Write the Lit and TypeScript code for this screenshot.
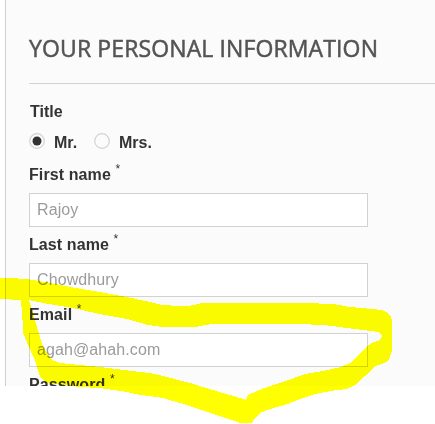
import { LitElement, html, css } from "lit";
import { customElement, property } from "lit/decorators.js";

@customElement("form-field")
class FormField extends LitElement {
  @property() label = "";
  @property() value = "";

  static styles = css`
    :host { display: block; height: 70px; }
    .label {
      height: 30px;
      line-height: 24px;
      font-weight: 700;
      font-size: 16px;
      letter-spacing: 0.1px;
      color: #333;
      white-space: nowrap;
    }
    .mark {
      display: inline-block;
      font-size: 12px;
      font-weight: 400;
      line-height: 0;
      letter-spacing: 0;
      transform: translateY(-7px);
    }
    input {
      display: block;
      box-sizing: border-box;
      width: 339px;
      height: 34px;
      margin: 0;
      padding: 0 7px;
      border: 1px solid #d2d2d2;
      border-radius: 0;
      background: #fff;
      color: #9c9b9b;
      font: 16px "Liberation Sans", Arial, sans-serif;
      letter-spacing: 0.1px;
      outline: none;
    }
  `;

  render() {
    return html`
      <div class="label">${this.label} <span class="mark">*</span></div>
      <input type="text" .value=${this.value} />
    `;
  }
}

@customElement("app-root")
class AppRoot extends LitElement {
  static styles = css`
    :host {
      display: block;
      position: relative;
      width: 435px;
      height: 424px;
      overflow: hidden;
      background: #fff;
      font-family: "Liberation Sans", Arial, sans-serif;
      isolation: isolate;
    }
    .panel {
      box-sizing: border-box;
      height: 386px;
      margin-left: 5px;
      padding: 31px 0 0 23px;
      border-left: 1px solid #d0d0d0;
      background: #fbfbfb;
      overflow: hidden;
    }
    h3 {
      box-sizing: border-box;
      height: 53px;
      margin: 0 0 16px;
      border-bottom: 1px solid #d2d2d2;
      font: 500 23px/35px "Open Sans", sans-serif;
      letter-spacing: 0.12px;
      -webkit-text-stroke: 0.5px #555454;
      color: #555454;
      white-space: nowrap;
    }
    .title {
      height: 24px;
      padding-left: 1px;
      font-size: 16px;
      font-weight: 700;
      line-height: 24px;
      color: #333;
    }
    .radios {
      display: flex;
      align-items: center;
      height: 38px;
      margin-bottom: 1px;
      font-size: 16px;
      font-weight: 700;
      color: #333;
    }
    .option { display: flex; align-items: center; width: 65px; }
    .option svg { flex: none; width: 16px; height: 16px; margin: -4px 9px 0 0; }
    .marker {
      position: absolute;
      inset: 0;
      mix-blend-mode: multiply;
      pointer-events: none;
    }
  `;

  private radio(label: string, checked: boolean) {
    return html`<div class="option">
      <svg viewBox="0 0 16 16">
        <circle cx="8" cy="8" r="7.3" fill="#fbfbfb" stroke="#d2d2d2" stroke-width="1.2" />
        <circle cx="8" cy="8" r="4.5" fill=${checked ? "#333" : "none"} />
      </svg>
      <span>${label}</span>
    </div>`;
  }

  render() {
    return html`
      <div class="panel">
        <h3>YOUR PERSONAL INFORMATION</h3>
        <div class="title">Title</div>
        <div class="radios">${this.radio("Mr.", true)}${this.radio("Mrs.", false)}</div>
        <form-field label="First name" value="Rajoy"></form-field>
        <form-field label="Last name" value="Chowdhury"></form-field>
        <form-field label="Email" value="agah@ahah.com"></form-field>
        <form-field label="Password"></form-field>
      </div>
      <svg class="marker" width="435" height="424" viewBox="0 0 435 424" shape-rendering="crispEdges">
        <path fill="#ff0" fill-rule="evenodd" d="M0 278H12L30 279.5L45 282L70 287L100 292L127 297L150 302L162 305L180 306L191 305.5L200 303.5L204 303H311L336 304.5L350 307L367 308.5L382 310L388 313L391 317L392 320V351L390 357L388 361L384 363L375 366L365 376L355 385L347 389L330 391L315 394L300 399L285 405L273 408L260 413L255 418L252 423H240L220 416L207 412L190 406L163 398L150 396L140 395L127 392L100 388L80 387L47 383L40 377L35 360L28 345L23.5 334L21 300L0 299Z
          M29 300L43 303L73 308L97 313.5L127 319L148 325L163 327H195L212 324H303L328 325.5L343 327.5L363 330L379 332L382 335.5L380 340L373 342.5L367 346L350 363L341 367L323 371L305 374L290 379.5L270 386L257 391L248 395L246 400L240 398L213 390L190 383L163 376L150 373L140 372L100 367L60 363L52 360L43 347L37 327L32 310Z" />
      </svg>
    `;
  }
}
